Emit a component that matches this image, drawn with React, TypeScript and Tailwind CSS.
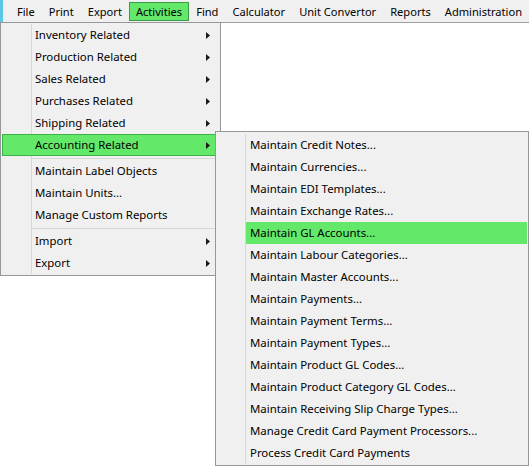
import React from 'react';

const menuBar = ['File', 'Print', 'Export', 'Activities', 'Find', 'Calculator', 'Unit Convertor', 'Reports', 'Administration'];

type Item = { label?: string; sub?: boolean; active?: boolean; sep?: boolean };

const activities: Item[] = [
  { label: 'Inventory Related', sub: true },
  { label: 'Production Related', sub: true },
  { label: 'Sales Related', sub: true },
  { label: 'Purchases Related', sub: true },
  { label: 'Shipping Related', sub: true },
  { label: 'Accounting Related', sub: true, active: true },
  { sep: true },
  { label: 'Maintain Label Objects' },
  { label: 'Maintain Units...' },
  { label: 'Manage Custom Reports' },
  { sep: true },
  { label: 'Import', sub: true },
  { label: 'Export', sub: true },
];

const accounting = [
  'Maintain Credit Notes...',
  'Maintain Currencies...',
  'Maintain EDI Templates...',
  'Maintain Exchange Rates...',
  'Maintain GL Accounts...',
  'Maintain Labour Categories...',
  'Maintain Master Accounts...',
  'Maintain Payments...',
  'Maintain Payment Terms...',
  'Maintain Payment Types...',
  'Maintain Product GL Codes...',
  'Maintain Product Category GL Codes...',
  'Maintain Receiving Slip Charge Types...',
  'Manage Credit Card Payment Processors...',
  'Process Credit Card Payments',
];

const Arrow = () => (
  <svg width="4" height="7" viewBox="0 0 4 7" className="shrink-0">
    <path d="M0 0 L4 3.5 L0 7 Z" fill="#1a1a1a" />
  </svg>
);

const App = () => {
  return (
    <div
      className="relative w-[529px] h-[467px] bg-white overflow-hidden text-[11.4px] text-black whitespace-nowrap"
      style={{ fontFamily: '"Noto Sans", "Open Sans", sans-serif' }}
    >
      {/* menu bar */}
      <div className="flex h-[23px] bg-[#f0f0f0] border-b border-[#a0a0a0] text-[11.1px]">
        <div className="w-[3px] h-full bg-[#5bc6e6]" />
        <div className="flex items-stretch pl-[7px] pt-[2px] pb-[1px]">
          {menuBar.map((m) => (
            <div
              key={m}
              className={`flex items-center px-[6px] leading-none ${
                m === 'Activities' ? 'bg-[#63e86a] border border-[#3a9b47]' : 'border border-transparent'
              }`}
            >
              {m}
            </div>
          ))}
        </div>
      </div>

      {/* Activities dropdown */}
      <div className="absolute left-0 top-[22px] w-[221px] bg-[#f0f0f0] border border-[#979797] py-[1px] pl-[1px] pr-[4px]">
        <div className="relative">
          <div className="absolute left-[29px] top-0 bottom-0 w-px bg-[#d7d7d7]" />
          {activities.map((it, i) =>
            it.sep ? (
              <div key={i} className="h-[4px] flex items-center pl-[30px]">
                <div className="w-full h-px bg-[#d7d7d7]" />
              </div>
            ) : (
              <div
                key={i}
                className={`relative flex items-center h-[22px] pl-[32px] pr-[5px] ${
                  it.active ? 'bg-[#63e86a] border border-[#3fb14a]' : 'border border-transparent'
                }`}
              >
                <span className="flex-1">{it.label}</span>
                {it.sub && <Arrow />}
              </div>
            )
          )}
        </div>
      </div>

      {/* Accounting submenu */}
      <div className="absolute left-[215px] top-[131px] w-[314px] bg-[#f0f0f0] border border-[#979797] pt-[2px] pb-[1px] pr-[1px]">
        <div className="relative">
          <div className="absolute left-[29px] top-0 bottom-0 w-px bg-[#d7d7d7]" />
          {accounting.map((a) => (
            <div
              key={a}
              className={`flex items-center h-[22px] ml-[29px] pl-[5px] ${
                a === 'Maintain GL Accounts...' ? 'bg-[#63e86a]' : ''
              }`}
            >
              {a}
            </div>
          ))}
        </div>
      </div>
    </div>
  );
};

export default App;
